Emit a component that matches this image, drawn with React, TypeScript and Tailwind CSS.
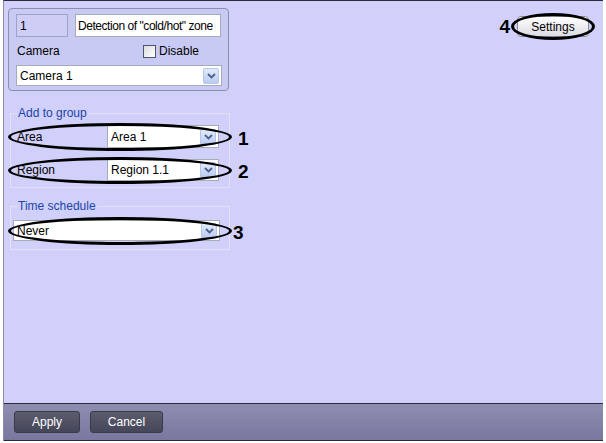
import React from 'react'

const font = { fontFamily: '"Liberation Sans", Arial, sans-serif' }

function Chevron() {
  return (
    <div className="flex h-[16px] w-[16px] items-center justify-center rounded-[2px] border border-[#b5c6ea] bg-gradient-to-b from-[#e3ebfb] to-[#b9cbf0]">
      <svg width="9" height="6" viewBox="0 0 9 6">
        <path d="M1 1 L4.5 4.5 L8 1" fill="none" stroke="#4d5f8c" strokeWidth="1.8" />
      </svg>
    </div>
  )
}

function Select({ value, className }: { value: string; className: string }) {
  return (
    <div className={`flex items-center justify-between border border-[#a5acb5] bg-white pl-[3px] pr-[2px] text-[12px] text-black ${className}`}>
      <span>{value}</span>
      <Chevron />
    </div>
  )
}

function Ellipse({ className }: { className: string }) {
  return <div className={`pointer-events-none absolute rounded-[50%] border-[3px] border-black ${className}`} />
}

function Num({ n, className }: { n: string; className: string }) {
  return <span className={`absolute text-[19px] font-bold leading-none text-black ${className}`}>{n}</span>
}

export default function App() {
  return (
    <div className="h-[443px] w-[606px] overflow-hidden bg-white" style={font}>
      <div className="ml-[3px] flex h-[441px] w-[600px] flex-col border-l border-t border-l-[#8c8c9c] border-t-[#2a2a3a]">
        <div className="flex flex-1 justify-between bg-[#d0d0fa] pl-[4px] pr-[14px] pt-[7px]">
          <div className="flex w-[224px] flex-col">
            {/* object box */}
            <div className="h-[83px] w-[221px] rounded-[4px] border border-[#8d8db0] bg-[#c9caf4] px-[7px] pt-[5px]">
              <div className="flex gap-[7px]">
                <div className="flex h-[23px] w-[52px] items-center border border-[#9fa3c8] bg-[#cdcdf6] pl-[3px] text-[12px]">1</div>
                <div className="flex h-[23px] w-[146px] items-center overflow-hidden whitespace-nowrap border border-[#a5acb5] bg-white pl-[2px] text-[12px] tracking-[-0.45px]">
                  Detection of "cold/hot" zone
                </div>
              </div>
              <div className="mt-[5px] flex h-[18px] items-center text-[12px]">
                <span className="ml-[1px] w-[126px]">Camera</span>
                <div className="h-[13px] w-[13px] border border-[#4a5570] bg-gradient-to-br from-[#dcdcdc] to-white" />
                <span className="ml-[3px]">Disable</span>
              </div>
              <Select value="Camera 1" className="mt-[5px] h-[21px] w-[206px]" />
            </div>

            {/* add to group */}
            <fieldset className="relative ml-[2px] mt-[15px] w-[220px] border border-[#e2e2f6] px-[6px] pb-[6px]">
              <legend className="px-[1px] text-[12px] leading-[14px] text-[#1c45a8]">Add to group</legend>
              <div className="relative mt-[5px] flex h-[23px] items-center">
                <span className="w-[90px] text-[12px]">Area</span>
                <Select value="Area 1" className="h-[23px] w-[112px]" />
                <Ellipse className="-left-[9px] -top-[2px] h-[28px] w-[224px]" />
                <Num n="1" className="left-[221px] top-[4px]" />
              </div>
              <div className="relative mt-[11px] flex h-[22px] items-center">
                <span className="w-[90px] text-[12px]">Region</span>
                <Select value="Region 1.1" className="h-[22px] w-[112px]" />
                <Ellipse className="-left-[9px] -top-[2px] h-[27px] w-[224px]" />
                <Num n="2" className="left-[221px] top-[3px]" />
              </div>
            </fieldset>

            {/* time schedule */}
            <fieldset className="relative ml-[2px] mt-[11px] w-[220px] border border-[#e2e2f6] pb-[8px] pl-[2px] pr-[8px]">
              <legend className="ml-[4px] px-[1px] text-[12px] leading-[14px] text-[#1c45a8]">Time schedule</legend>
              <div className="relative mt-[7px]">
                <Select value="Never" className="h-[21px] w-[207px]" />
                <Ellipse className="-left-[5px] -top-[3px] h-[28px] w-[224px]" />
                <Num n="3" className="left-[220px] top-[3px]" />
              </div>
            </fieldset>
          </div>

          <div className="mt-[8px] flex h-[21px] items-center">
            <span className="mr-[7px] text-[19px] font-bold leading-none">4</span>
            <div className="relative">
              <div className="flex h-[21px] w-[72px] items-center justify-center rounded-[4px] border border-[#8a8a96] bg-gradient-to-b from-white to-[#dcdce2] text-[12px]">
                Settings
              </div>
              <Ellipse className="-left-[6px] -top-[3px] h-[27px] w-[84px]" />
            </div>
          </div>
        </div>

        <div className="flex h-[38px] gap-[10px] border-y border-[#2a2a3a] bg-gradient-to-b from-[#8e8eb0] to-[#7878a0] pl-[10px] pt-[7px]">
          <div className="flex h-[22px] w-[66px] items-center justify-center rounded-[3px] border border-[#3a3a48] bg-gradient-to-b from-[#5c5c6e] to-[#46465a] text-[12px] text-white">
            Apply
          </div>
          <div className="flex h-[22px] w-[73px] items-center justify-center rounded-[3px] border border-[#3a3a48] bg-gradient-to-b from-[#5c5c6e] to-[#46465a] text-[12px] text-white">
            Cancel
          </div>
        </div>
      </div>
    </div>
  )
}
